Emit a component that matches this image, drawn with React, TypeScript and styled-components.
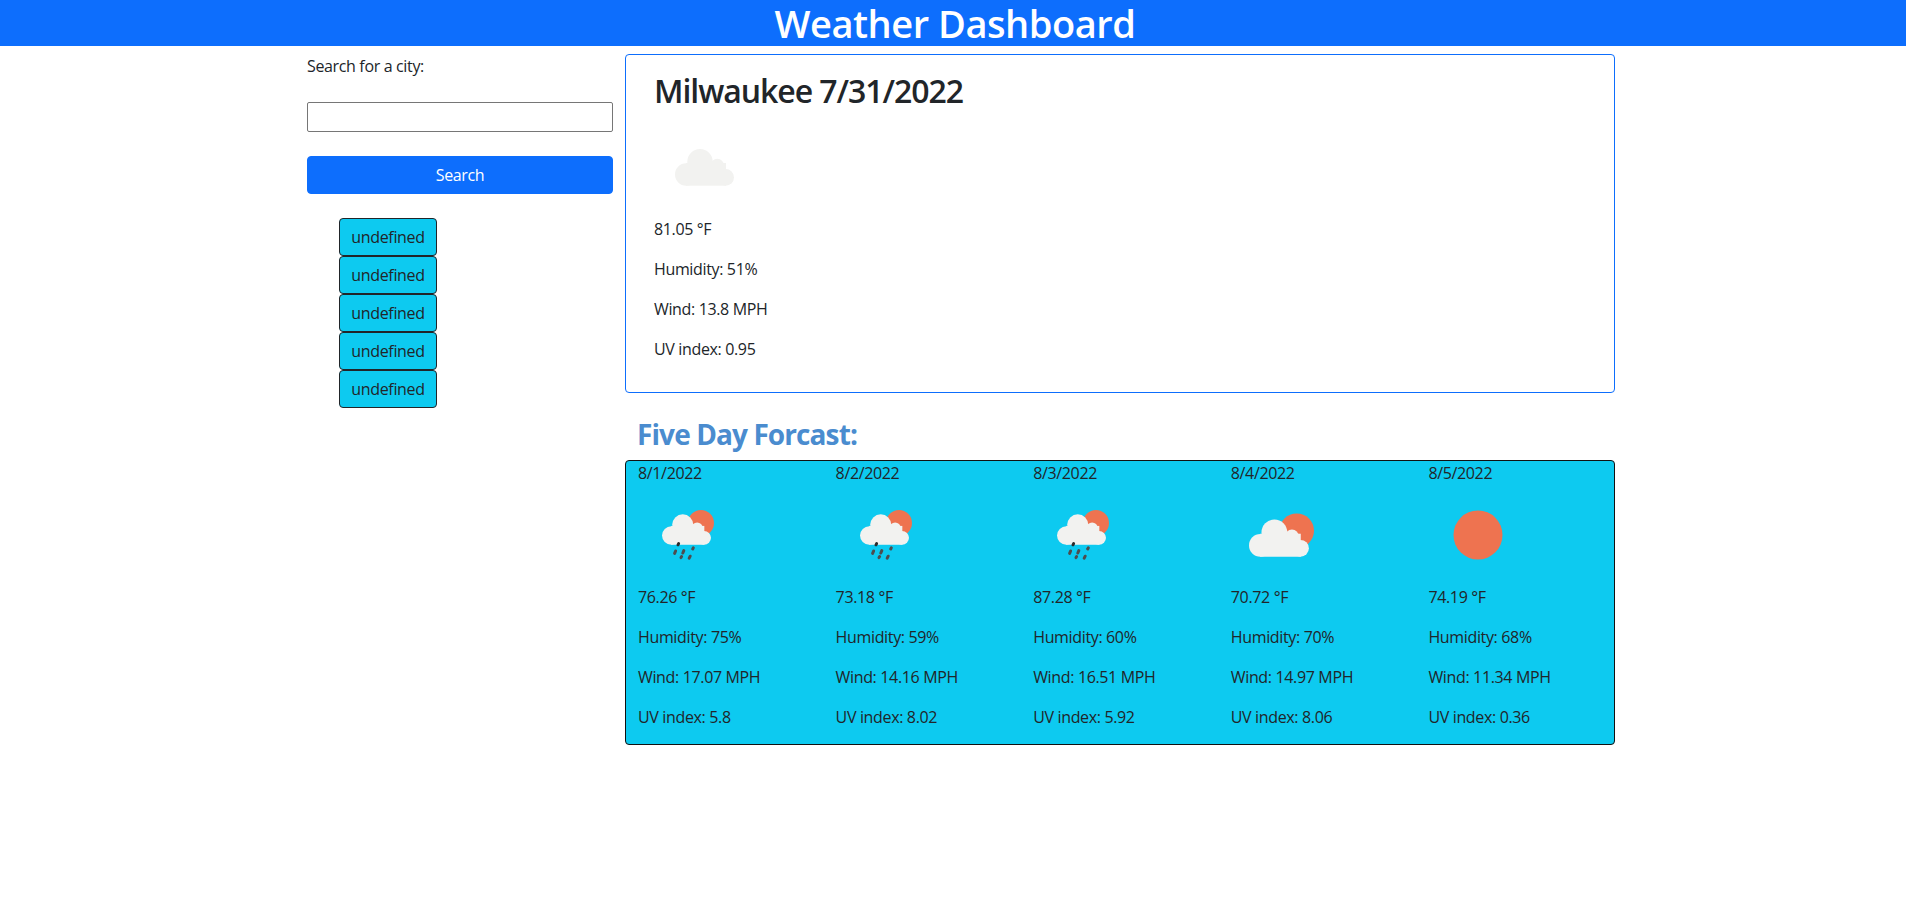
import styled, {createGlobalStyle} from "styled-components";

const GlobalStyle = createGlobalStyle`
  * {
    box-sizing: border-box;
  }

  body {
    margin: 0;
    background: #fff;
    color: #212529;
    font-family: "Open Sans", "Liberation Sans", sans-serif;
    font-size: 16px;
    line-height: 24px;
    letter-spacing: -0.35px;
  }
`;

const Header = styled.header`
  height: 46px;
  padding-left: 4px;
  background: #0d6efd;
  color: #fff;
  text-align: center;
  font-size: 38px;
  font-weight: 600;
  line-height: 46px;
  letter-spacing: -0.45px;
`;

const Page = styled.div`
  display: flex;
  gap: 12px;
  padding: 8px 0 0 307px;
`;

const Sidebar = styled.aside`
  width: 306px;
  display: flex;
  flex-direction: column;
  align-items: stretch;
`;

const Label = styled.label`
  margin-bottom: 24px;
`;

const CityInput = styled.input`
  height: 30px;
  margin-bottom: 24px;
  border: 1px solid #767676;
  border-radius: 2px;
  background: #fff;
`;

const SearchButton = styled.button`
  height: 38px;
  margin-bottom: 24px;
  border: 1px solid #0d6efd;
  border-radius: 4px;
  background: #0d6efd;
  color: #fff;
  font: inherit;
  letter-spacing: inherit;
`;

const HistoryList = styled.ul`
  list-style: none;
  margin: 0;
  padding: 0 0 0 32px;
`;

const HistoryButton = styled.button`
  display: block;
  width: 98px;
  height: 38px;
  padding: 0;
  border: 1px solid #212529;
  border-radius: 4px;
  background: #0dcaf0;
  color: #212529;
  font: inherit;
  letter-spacing: inherit;
`;

const Main = styled.main`
  width: 990px;
`;

const CurrentCard = styled.section`
  height: 339px;
  padding: 16px 28px;
  border: 1px solid #0d6efd;
  border-radius: 4px;
`;

const CityTitle = styled.h2`
  margin: 0 0 8px;
  font-size: 32px;
  font-weight: 600;
  line-height: 40.4px;
  height: 38.4px;
  letter-spacing: -1.05px;
`;

const Stat = styled.p`
  margin: 0 0 16px;
`;

const ForecastTitle = styled.h3`
  margin: 24px 0 0 12px;
  height: 43px;
  color: #4a8ccf;
  font-size: 28px;
  font-weight: 700;
  line-height: 35.6px;
  letter-spacing: -0.9px;
`;

const ForecastBox = styled.section`
  display: grid;
  grid-template-columns: repeat(5, 1fr);
  height: 285px;
  border: 1px solid #111;
  border-radius: 4px;
  background: #0dcaf0;
`;

const DayColumn = styled.div`
  padding: 0 12px;
`;

const IconSvg = styled.svg`
  display: block;
  width: 100px;
  height: 100px;
`;

type IconKind = "cloud" | "partly" | "rain" | "sun";

const SUN = "#ee7350";
const CLOUD = "#f2f2f0";

// cloud outline made of four lobes, drawn on a flat base
const CloudShape = ({x, y, s}: { x: number, y: number, s: number }) => (
    <g transform={`translate(${x} ${y}) scale(${s})`} fill={CLOUD}>
        <circle cx="25" cy="12.7" r="12.7"/>
        <circle cx="42.3" cy="16.5" r="6.7"/>
        <circle cx="11.2" cy="25.5" r="11.2"/>
        <circle cx="50.7" cy="28.4" r="8.3"/>
        <rect x="11" y="14" width="40" height="22.7"/>
    </g>
);

const WeatherIcon = ({kind}: { kind: IconKind }) => {
    if (kind === "sun") {
        return (
            <IconSvg viewBox="0 0 100 100">
                <circle cx="50" cy="50" r="24.5" fill={SUN}/>
            </IconSvg>
        );
    }
    if (kind === "cloud") {
        return (
            <IconSvg viewBox="0 0 100 100">
                <CloudShape x={21} y={32} s={1}/>
            </IconSvg>
        );
    }
    if (kind === "partly") {
        return (
            <IconSvg viewBox="0 0 100 100">
                <circle cx="65.7" cy="45.7" r="17.3" fill={SUN}/>
                <CloudShape x={18} y={34.5} s={1.015}/>
            </IconSvg>
        );
    }
    return (
        <IconSvg viewBox="0 0 100 100">
            <circle cx="63" cy="38" r="13" fill={SUN}/>
            <CloudShape x={24} y={29.3} s={0.83}/>
            <g stroke="#4d4d4f" strokeWidth="3" strokeLinecap="round">
                <path d="M40.6 58.6 L40 59.8" stroke="#2b2b2d"/>
                <path d="M37.6 66 L36.6 68.4"/>
                <path d="M45.8 65.6 L44.8 68"/>
                <path d="M55.3 62.8 L54.7 64"/>
                <path d="M43.6 71.6 L43 72.6"/>
                <path d="M52.2 71.2 L51.2 73.2"/>
            </g>
        </IconSvg>
    );
};

const days: { date: string, icon: IconKind, temp: string, humidity: string, wind: string, uv: string }[] = [
    {date: "8/1/2022", icon: "rain", temp: "76.26", humidity: "75", wind: "17.07", uv: "5.8"},
    {date: "8/2/2022", icon: "rain", temp: "73.18", humidity: "59", wind: "14.16", uv: "8.02"},
    {date: "8/3/2022", icon: "rain", temp: "87.28", humidity: "60", wind: "16.51", uv: "5.92"},
    {date: "8/4/2022", icon: "partly", temp: "70.72", humidity: "70", wind: "14.97", uv: "8.06"},
    {date: "8/5/2022", icon: "sun", temp: "74.19", humidity: "68", wind: "11.34", uv: "0.36"},
];

const App = () => {
    return (
        <>
            <GlobalStyle/>
            <Header>Weather Dashboard</Header>
            <Page>
                <Sidebar>
                    <Label htmlFor="city">Search for a city:</Label>
                    <CityInput id="city" type="text"/>
                    <SearchButton>Search</SearchButton>
                    <HistoryList>
                        {[0, 1, 2, 3, 4].map((i) => (
                            <li key={i}><HistoryButton>undefined</HistoryButton></li>
                        ))}
                    </HistoryList>
                </Sidebar>
                <Main>
                    <CurrentCard>
                        <CityTitle>Milwaukee 7/31/2022</CityTitle>
                        <WeatherIcon kind="cloud"/>
                        <Stat>81.05 °F</Stat>
                        <Stat>Humidity: 51%</Stat>
                        <Stat>Wind: 13.8 MPH</Stat>
                        <Stat>UV index: 0.95</Stat>
                    </CurrentCard>
                    <ForecastTitle>Five Day Forcast:</ForecastTitle>
                    <ForecastBox>
                        {days.map((day) => (
                            <DayColumn key={day.date}>
                                {day.date}
                                <WeatherIcon kind={day.icon}/>
                                <Stat>{day.temp} °F</Stat>
                                <Stat>Humidity: {day.humidity}%</Stat>
                                <Stat>Wind: {day.wind} MPH</Stat>
                                <Stat>UV index: {day.uv}</Stat>
                            </DayColumn>
                        ))}
                    </ForecastBox>
                </Main>
            </Page>
        </>
    );
};

export default App;
